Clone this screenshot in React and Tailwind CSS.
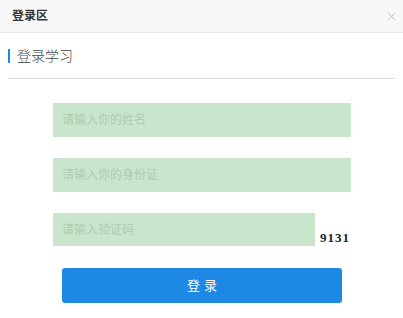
import { X } from 'lucide-react';

const font = { fontFamily: '"Liberation Sans", "Noto Sans CJK SC", sans-serif' };

export default function App() {
    return (
        <div className="w-[403px] h-[318px] bg-white overflow-hidden" style={font}>
            {/* header */}
            <div className="h-[33px] bg-[#f8f8f8] border-b border-[#e9e9e9] flex items-center justify-between pl-[12px] pr-[5px]">
                <span className="text-[12px] font-bold text-[#333]">登录区</span>
                <X className="w-[13px] h-[13px] text-[#aaa]" strokeWidth={1.3} />
            </div>

            <div className="px-[8px]">
                <div className="h-[45px] flex items-center border-b border-[#dcdcdc] mt-[1px]">
                    <div className="w-[2px] h-[14px] bg-[#1e88e5]" />
                    <span className="ml-[7px] text-[14px] text-[#444] font-light">登录学习</span>
                </div>
            </div>

            <div className="flex flex-col pl-[53px] pt-[24px]">
                <input
                    className="w-[298px] h-[34px] bg-[#c9e6cc] px-[9px] text-[12px] outline-none placeholder:text-[#aecbb1]"
                    placeholder="请输入你的姓名"
                    style={font}
                />
                <input
                    className="w-[298px] h-[34px] bg-[#c9e6cc] px-[9px] text-[12px] outline-none placeholder:text-[#aecbb1] mt-[21px]"
                    placeholder="请输入你的身份证"
                    style={font}
                />
                <div className="flex items-end mt-[21px]">
                    <input
                        className="w-[262px] h-[33px] bg-[#c9e6cc] px-[9px] text-[12px] outline-none placeholder:text-[#aecbb1]"
                        placeholder="请输入验证码"
                        style={font}
                    />
                    <span
                        className="ml-[5px] -mb-[1px] text-[13px] font-bold text-[#222] tracking-[1px]"
                        style={{ fontFamily: '"Liberation Serif", serif' }}
                    >
                        9131
                    </span>
                </div>
                <button className="ml-[9px] mt-[22px] w-[280px] h-[35px] bg-[#1e88e5] rounded-[3px] text-white text-[13px] tracking-[4px] pl-[4px]">
                    登录
                </button>
            </div>
        </div>
    );
}
